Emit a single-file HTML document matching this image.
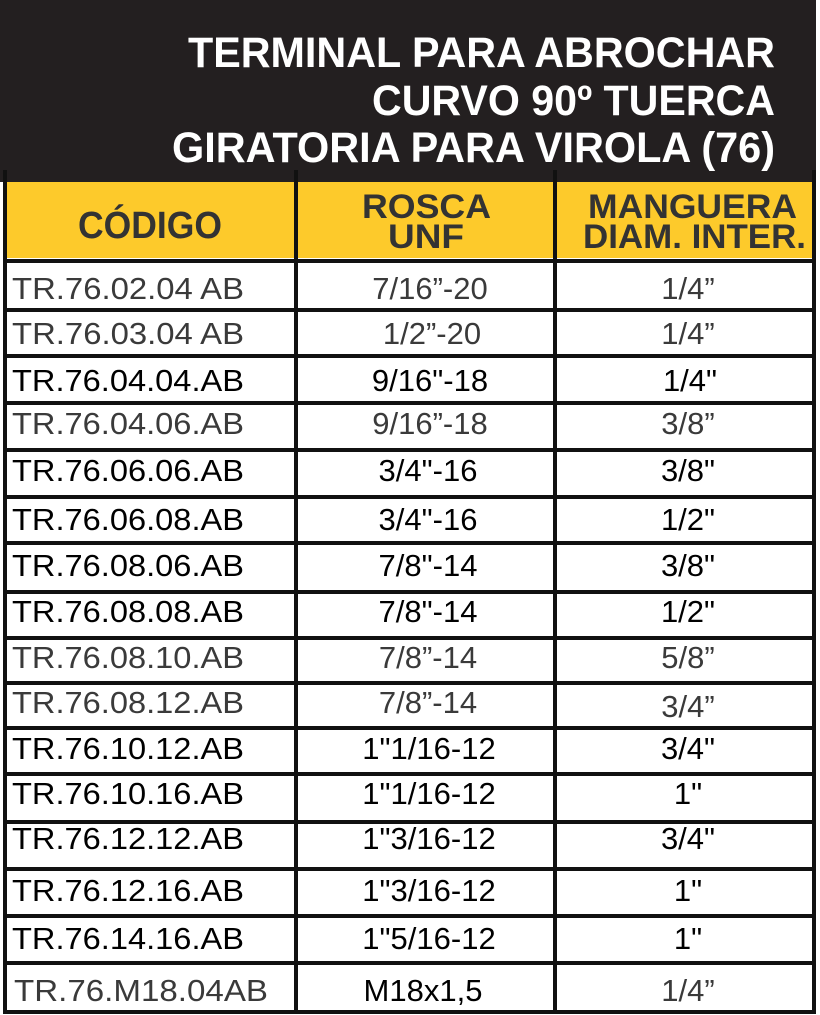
<!DOCTYPE html>
<html><head><meta charset="utf-8"><style>
html,body{margin:0;padding:0;background:#fff;width:820px;height:1015px;overflow:hidden}
svg{display:block}
</style></head><body>
<svg width="820" height="1015" viewBox="0 0 820 1015" xmlns="http://www.w3.org/2000/svg" font-family="Liberation Sans, Arial, sans-serif">
<rect x="0" y="0" width="816" height="182" fill="#231f20"/>
<rect x="3" y="170" width="4" height="842" fill="#111"/>
<rect x="7" y="182" width="806" height="76" fill="#fdca2b"/>
<g fill="#fff" font-weight="bold" font-size="43">
<text x="188" y="67" textLength="587" lengthAdjust="spacingAndGlyphs">TERMINAL PARA ABROCHAR</text>
<text x="372" y="115" textLength="403" lengthAdjust="spacingAndGlyphs">CURVO 90º TUERCA</text>
<text x="172" y="162" textLength="603" lengthAdjust="spacingAndGlyphs">GIRATORIA PARA VIROLA (76)</text>
</g>
<g fill="#333" font-weight="bold">
<text x="78" y="238" font-size="38" textLength="144" lengthAdjust="spacingAndGlyphs">CÓDIGO</text>
<text x="362" y="218" font-size="34" textLength="129" lengthAdjust="spacingAndGlyphs">ROSCA</text>
<text x="388" y="248" font-size="34" textLength="76" lengthAdjust="spacingAndGlyphs">UNF</text>
<text x="588" y="218" font-size="34" textLength="209" lengthAdjust="spacingAndGlyphs">MANGUERA</text>
<text x="583" y="248" font-size="34" textLength="223" lengthAdjust="spacingAndGlyphs">DIAM. INTER.</text>
</g>
<g fill="#111">
<rect x="294" y="170" width="4" height="842"/>
<rect x="553" y="170" width="4" height="842"/>
<rect x="812" y="170" width="4" height="842"/>
<rect x="3" y="259" width="813" height="4"/>
<rect x="3" y="308" width="813" height="4"/>
<rect x="3" y="354" width="813" height="4"/>
<rect x="3" y="401" width="813" height="4"/>
<rect x="3" y="448" width="813" height="4"/>
<rect x="3" y="495" width="813" height="4"/>
<rect x="3" y="541" width="813" height="4"/>
<rect x="3" y="590" width="813" height="4"/>
<rect x="3" y="636" width="813" height="4"/>
<rect x="3" y="681" width="813" height="4"/>
<rect x="3" y="726" width="813" height="4"/>
<rect x="3" y="772" width="813" height="4"/>
<rect x="3" y="820" width="813" height="4"/>
<rect x="3" y="867" width="813" height="4"/>
<rect x="3" y="914" width="813" height="4"/>
<rect x="3" y="961" width="813" height="4"/>
<rect x="3" y="1010" width="813" height="4"/>
</g>
<g font-size="31">
<g fill="#3a3a3a"><text x="12" y="299" textLength="232" lengthAdjust="spacingAndGlyphs">TR.76.02.04 AB</text><text x="430" y="299" text-anchor="middle">7/16”-20</text><text x="688" y="299" text-anchor="middle">1/4”</text></g>
<g fill="#3a3a3a"><text x="12" y="344" textLength="232" lengthAdjust="spacingAndGlyphs">TR.76.03.04 AB</text><text x="432" y="344" text-anchor="middle">1/2”-20</text><text x="688" y="344" text-anchor="middle">1/4”</text></g>
<g fill="#000"><text x="12" y="391" textLength="232" lengthAdjust="spacingAndGlyphs">TR.76.04.04.AB</text><text x="430" y="391" text-anchor="middle">9/16"-18</text><text x="690" y="391" text-anchor="middle">1/4"</text></g>
<g fill="#3a3a3a"><text x="12" y="434" textLength="232" lengthAdjust="spacingAndGlyphs">TR.76.04.06.AB</text><text x="430" y="434" text-anchor="middle">9/16”-18</text><text x="688" y="434" text-anchor="middle">3/8”</text></g>
<g fill="#000"><text x="12" y="481" textLength="232" lengthAdjust="spacingAndGlyphs">TR.76.06.06.AB</text><text x="428" y="481" text-anchor="middle">3/4"-16</text><text x="688" y="481" text-anchor="middle">3/8"</text></g>
<g fill="#000"><text x="12" y="530" textLength="232" lengthAdjust="spacingAndGlyphs">TR.76.06.08.AB</text><text x="428" y="530" text-anchor="middle">3/4"-16</text><text x="688" y="530" text-anchor="middle">1/2"</text></g>
<g fill="#000"><text x="12" y="576" textLength="232" lengthAdjust="spacingAndGlyphs">TR.76.08.06.AB</text><text x="428" y="576" text-anchor="middle">7/8"-14</text><text x="688" y="576" text-anchor="middle">3/8"</text></g>
<g fill="#000"><text x="12" y="622" textLength="232" lengthAdjust="spacingAndGlyphs">TR.76.08.08.AB</text><text x="428" y="622" text-anchor="middle">7/8"-14</text><text x="688" y="622" text-anchor="middle">1/2"</text></g>
<g fill="#3a3a3a"><text x="12" y="668" textLength="232" lengthAdjust="spacingAndGlyphs">TR.76.08.10.AB</text><text x="428" y="668" text-anchor="middle">7/8”-14</text><text x="688" y="668" text-anchor="middle">5/8”</text></g>
<g fill="#3a3a3a"><text x="12" y="713" textLength="232" lengthAdjust="spacingAndGlyphs">TR.76.08.12.AB</text><text x="428" y="713" text-anchor="middle">7/8”-14</text><text x="688" y="717" text-anchor="middle">3/4”</text></g>
<g fill="#000"><text x="12" y="759" textLength="232" lengthAdjust="spacingAndGlyphs">TR.76.10.12.AB</text><text x="429" y="759" text-anchor="middle">1"1/16-12</text><text x="688" y="759" text-anchor="middle">3/4"</text></g>
<g fill="#000"><text x="12" y="804" textLength="232" lengthAdjust="spacingAndGlyphs">TR.76.10.16.AB</text><text x="429" y="804" text-anchor="middle">1"1/16-12</text><text x="688" y="804" text-anchor="middle">1"</text></g>
<g fill="#000"><text x="12" y="849" textLength="232" lengthAdjust="spacingAndGlyphs">TR.76.12.12.AB</text><text x="429" y="849" text-anchor="middle">1"3/16-12</text><text x="688" y="849" text-anchor="middle">3/4"</text></g>
<g fill="#000"><text x="12" y="901" textLength="232" lengthAdjust="spacingAndGlyphs">TR.76.12.16.AB</text><text x="429" y="901" text-anchor="middle">1"3/16-12</text><text x="688" y="901" text-anchor="middle">1"</text></g>
<g fill="#000"><text x="12" y="949" textLength="232" lengthAdjust="spacingAndGlyphs">TR.76.14.16.AB</text><text x="429" y="949" text-anchor="middle">1"5/16-12</text><text x="688" y="949" text-anchor="middle">1"</text></g>
<g><text x="14" y="1001" fill="#3a3a3a" textLength="254" lengthAdjust="spacingAndGlyphs">TR.76.M18.04AB</text><text x="423" y="1001" fill="#000" text-anchor="middle">M18x1,5</text><text x="688" y="1001" fill="#3a3a3a" text-anchor="middle">1/4”</text></g>
</g>
</svg>
</body></html>
